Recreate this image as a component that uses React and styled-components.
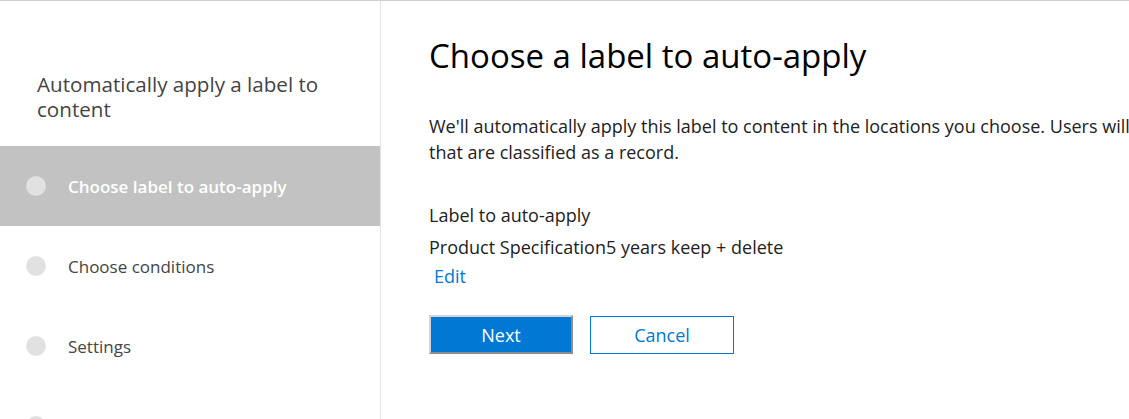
import React from 'react'
import styled, { createGlobalStyle } from 'styled-components'

const GlobalStyle = createGlobalStyle`
    html, body {
        margin: 0;
        padding: 0;
        background: #ffffff;
        overflow: hidden;
    }
    body {
        font-family: "Open Sans", "Noto Sans", sans-serif;
        color: #333333;
    }
`;

const steps = [
    { label: 'Choose label to auto-apply', active: true },
    { label: 'Choose conditions' },
    { label: 'Settings' },
    { label: 'Review' },
];

const App = () => {
    return (
        <>
            <GlobalStyle />
            <Page>
                <Sidebar>
                    <WizardTitle>Automatically apply a label to content</WizardTitle>
                    <StepList>
                        {steps.map((step) => (
                            <Step key={step.label} $active={step.active}>
                                <StepDot />
                                <StepLabel $active={step.active}>{step.label}</StepLabel>
                            </Step>
                        ))}
                    </StepList>
                </Sidebar>
                <Main>
                    <Heading>Choose a label to auto-apply</Heading>
                    <Description>
                        We'll automatically apply this label to content in the locations you choose. Users will be unable to edit or delete items
                        <br />
                        that are classified as a record.
                    </Description>
                    <FieldLabel>Label to auto-apply</FieldLabel>
                    <FieldValue>Product Specification5 years keep + delete</FieldValue>
                    <EditLink href="#">Edit</EditLink>
                    <Actions>
                        <PrimaryButton type="button">Next</PrimaryButton>
                        <SecondaryButton type="button">Cancel</SecondaryButton>
                    </Actions>
                </Main>
            </Page>
        </>
    );
}

export default App

const Page = styled.div`
    display: flex;
    width: 100%;
    height: 100vh;
    border-top: 1px solid #cfcfcf;
    box-sizing: border-box;
    overflow: hidden;
`;

const Sidebar = styled.aside`
    flex: 0 0 381px;
    display: flex;
    flex-direction: column;
    border-right: 1px solid #e3e3e3;
    box-sizing: border-box;
`;

const WizardTitle = styled.h2`
    flex-shrink: 0;
    margin: 0;
    padding: 71px 37px 0;
    height: 145px;
    box-sizing: border-box;
    font-size: 20.6px;
    line-height: 25px;
    font-weight: 400;
    color: #444444;
`;

const StepList = styled.ul`
    flex-shrink: 0;
    list-style: none;
    margin: 0;
    padding: 0;
`;

const Step = styled.li`
    display: flex;
    align-items: center;
    gap: 22px;
    height: 80px;
    padding-left: 26px;
    background: ${({ $active }) => ($active ? '#c2c2c2' : 'transparent')};
`;

const StepDot = styled.span`
    width: 20px;
    height: 20px;
    border-radius: 50%;
    background: #e1e1e1;
    flex-shrink: 0;
`;

const StepLabel = styled.span`
    font-size: 17px;
    font-weight: ${({ $active }) => ($active ? 600 : 400)};
    color: ${({ $active }) => ($active ? '#ffffff' : '#444444')};
`;

const Main = styled.main`
    flex: 1;
    min-width: 0;
    padding: 35px 0 0 48px;
    display: flex;
    flex-direction: column;
    align-items: flex-start;
`;

const Heading = styled.h1`
    margin: 0;
    font-size: 33px;
    line-height: 40px;
    font-weight: 400;
    color: #000000;
`;

const Description = styled.p`
    margin: 37px 0 0;
    font-size: 18px;
    line-height: 26px;
    white-space: nowrap;
    color: #222222;
`;

const FieldLabel = styled.div`
    margin-top: 37px;
    font-size: 18px;
    line-height: 26px;
    color: #222222;
`;

const FieldValue = styled.div`
    margin-top: 6px;
    font-size: 18px;
    line-height: 26px;
    color: #222222;
`;

const EditLink = styled.a`
    margin: 3px 0 0 5px;
    font-size: 18px;
    line-height: 26px;
    color: #0078d4;
    text-decoration: none;
`;

const Actions = styled.div`
    display: flex;
    gap: 17px;
    margin-top: 26px;
`;

const PrimaryButton = styled.button`
    width: 144px;
    height: 39px;
    box-sizing: border-box;
    border: 2px solid;
    border-color: #d4d4d4 #8c8c8c #8c8c8c #d4d4d4;
    background: #0078d4;
    color: #ffffff;
    font-family: inherit;
    font-size: 18px;
`;

const SecondaryButton = styled.button`
    width: 144px;
    height: 38px;
    margin-top: 1px;
    box-sizing: border-box;
    border: 1px solid #0078d4;
    background: #ffffff;
    color: #0078d4;
    font-family: inherit;
    font-size: 18px;
`;
